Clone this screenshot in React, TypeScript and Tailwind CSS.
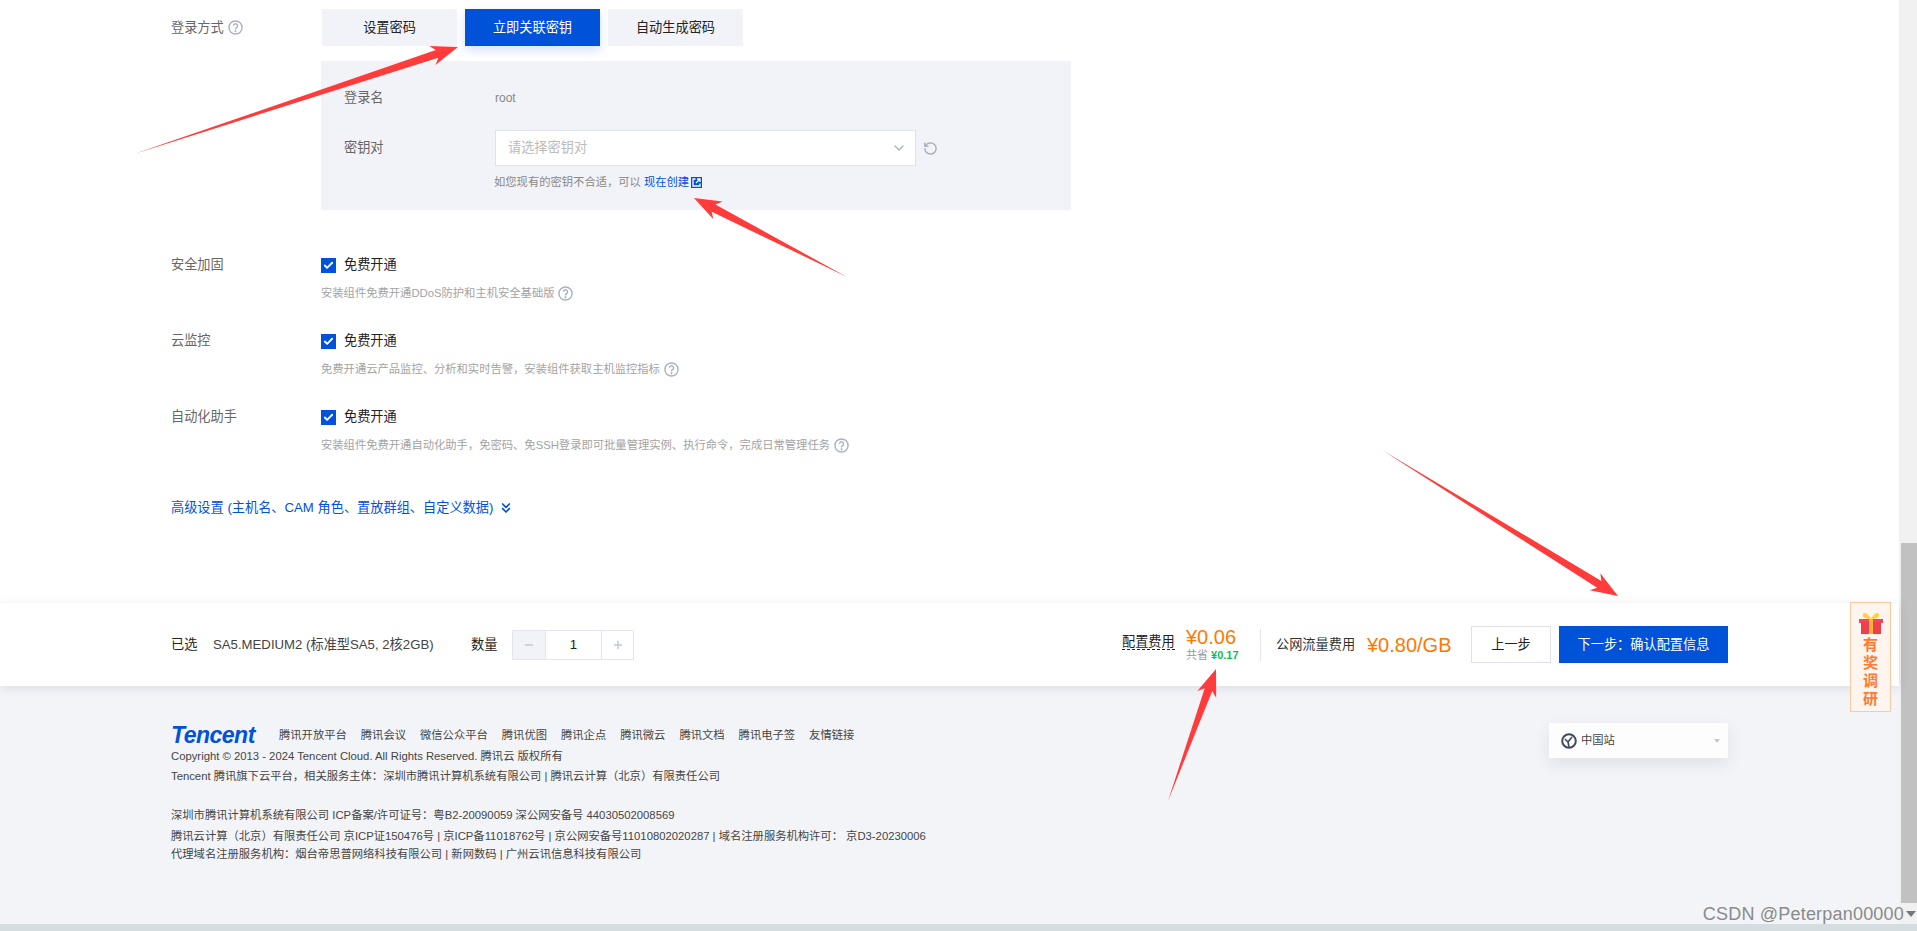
import React from "react";
import { Check, ChevronDown, ChevronsDown, Minus, Plus, RotateCw } from "lucide-react";

const font = "[font-family:'Liberation_Sans','Noto_Sans_CJK_SC',sans-serif]";

const HelpIcon = ({ size = 15 }: { size?: number }) => (
  <svg width={size} height={size} viewBox="0 0 16 16" fill="none" stroke="#a9b2c2" className="shrink-0">
    <circle cx="8" cy="8" r="7" strokeWidth="1.5" />
    <path d="M5.8 6.2a2.2 2.2 0 1 1 3.4 1.9C8.4 8.6 8 9 8 10" strokeWidth="1.5" />
    <circle cx="8" cy="12" r="0.7" fill="#a9b2c2" />
  </svg>
);

// tapered red annotation arrow, tail to tip
const Arrow = ({ x1, y1, x2, y2 }: { x1: number; y1: number; x2: number; y2: number }) => {
  const len = Math.hypot(x2 - x1, y2 - y1);
  const ux = (x2 - x1) / len;
  const uy = (y2 - y1) / len;
  const pt = (back: number, side: number) =>
    `${x2 - ux * back - uy * side},${y2 - uy * back + ux * side}`;
  const points = [
    `${x1},${y1}`,
    pt(22, 4),
    pt(27, 10),
    `${x2},${y2}`,
    pt(27, -10),
    pt(22, -4),
  ].join(" ");
  return <polygon points={points} fill="#ff3b3b" />;
};

const options = [
  { label: "安全加固", desc: "安装组件免费开通DDoS防护和主机安全基础版" },
  { label: "云监控", desc: "免费开通云产品监控、分析和实时告警，安装组件获取主机监控指标" },
  { label: "自动化助手", desc: "安装组件免费开通自动化助手，免密码、免SSH登录即可批量管理实例、执行命令，完成日常管理任务" },
];

const links = ["腾讯开放平台", "腾讯会议", "微信公众平台", "腾讯优图", "腾讯企点", "腾讯微云", "腾讯文档", "腾讯电子签", "友情链接"];

const App = () => {
  return (
    <div className={`${font} relative h-[931px] flex flex-col overflow-hidden bg-white text-[13.2px] text-[#333]`}>
      <div className="flex h-[924px]">
        <div className="flex-1 min-w-0 flex flex-col">
          {/* form */}
          <div className="h-[603px] pl-[171px] pt-[9px] bg-white">
            <div className="flex">
              <div className="w-[151px] h-[37px] flex items-center gap-1 text-[#666]">
                登录方式
                <HelpIcon />
              </div>
              <div className="flex gap-2">
                <div className="w-[135px] h-[37px] flex items-center justify-center bg-[#f2f3f8] text-[#222]">设置密码</div>
                <div className="w-[135px] h-[37px] flex items-center justify-center bg-[#0052d9] text-white shadow-[0_4px_10px_rgba(0,82,217,0.18)]">立即关联密钥</div>
                <div className="w-[135px] h-[37px] flex items-center justify-center bg-[#f2f3f8] text-[#222]">自动生成密码</div>
              </div>
            </div>

            <div className="ml-[150px] mt-[15px] w-[750px] h-[149px] bg-[#f2f3f8] pl-[23px] pt-[28px]">
              <div className="flex items-center h-[18px]">
                <span className="w-[151px] text-[#666]">登录名</span>
                <span className="text-[#888] text-xs">root</span>
              </div>
              <div className="flex items-center mt-[23px]">
                <span className="w-[151px] text-[#666]">密钥对</span>
                <div className="w-[421px] h-[36px] bg-white border border-[#dfe2ea] flex items-center justify-between pl-3 pr-[8px] text-[#bbb]">
                  请选择密钥对
                  <ChevronDown size={16} className="text-[#a9b2c2]" />
                </div>
                <RotateCw size={15} className="ml-[7px] text-[#a0a7b4] -scale-x-100" />
              </div>
              <div className="ml-[150px] mt-[8px] flex items-center text-[11.3px] text-[#888]">
                如您现有的密钥不合适，可以
                <span className="ml-[3px] text-[#0052d9]">现在创建</span>
                <span className="ml-[2px] w-[11px] h-[11px] bg-[#0052d9] flex items-center justify-center">
                  <svg width="9" height="9" viewBox="0 0 9 9" fill="none" stroke="#fff" strokeWidth="1.3">
                    <path d="M3.5 1H1v7h7V5.5M5 1h3v3M8 1L4 5" />
                  </svg>
                </span>
              </div>
            </div>

            <div className="mt-[46px] flex flex-col gap-[30px]">
              {options.map((o) => (
                <div key={o.label} className="flex">
                  <div className="w-[150px] leading-[18px] text-[#666]">{o.label}</div>
                  <div>
                    <div className="flex items-center gap-[8px] h-[18px] text-[#222]">
                      <span className="w-[15px] h-[15px] bg-[#0052d9] flex items-center justify-center">
                        <Check size={11} strokeWidth={4} className="text-white" />
                      </span>
                      免费开通
                    </div>
                    <div className="mt-[10px] flex items-center gap-[4px] text-[11.3px] leading-[18px] text-[#a3a3a3]">
                      {o.desc}
                      <HelpIcon />
                    </div>
                  </div>
                </div>
              ))}
            </div>

            <div className="mt-[44px] flex items-center gap-[5px] text-[#0052d9]">
              高级设置 (主机名、CAM 角色、置放群组、自定义数据)
              <ChevronsDown size={16} strokeWidth={2.5} />
            </div>
          </div>

          {/* selection bar */}
          <div className="relative z-10 h-[83px] shrink-0 bg-white shadow-[0_2px_10px_rgba(54,58,80,0.12)] flex items-center justify-between px-[171px]">
            <div className="flex items-center">
              <span className="w-[42px] text-[#222]">已选</span>
              <span className="w-[258px] text-[#444] whitespace-nowrap">SA5.MEDIUM2 (标准型SA5, 2核2GB)</span>
              <span className="w-[41px] text-[#222]">数量</span>
              <div className="flex items-center">
                <span className="w-[34px] h-[30px] bg-[#f2f3f8] border border-[#e3e6ee] flex items-center justify-center">
                  <Minus size={12} strokeWidth={3} className="text-[#c0c8d6]" />
                </span>
                <span className="w-[55px] h-[30px] border-y border-[#e3e6ee] flex items-center justify-center text-[#222]">1</span>
                <span className="w-[33px] h-[30px] border border-[#e3e6ee] flex items-center justify-center">
                  <Plus size={12} strokeWidth={3} className="text-[#c0c8d6]" />
                </span>
              </div>
            </div>

            <div className="flex items-center">
              <span className="w-[53px] mr-[11px] leading-[15px] border-b border-dashed border-[#222] text-[#222] -mt-[6px] whitespace-nowrap">配置费用</span>
              <div className="w-[74px]">
                <div className="text-[20px] leading-[24px] text-[#ff7800] -mt-[2px]">¥0.06</div>
                <div className="text-[11px] leading-[13px] text-[#999]">
                  共省 <b className="text-[#0abf5b]">¥0.17</b>
                </div>
              </div>
              <span className="w-px h-[32px] bg-[#e3e6ee] mr-[15px]" />
              <span className="w-[91px] text-[#333] whitespace-nowrap">公网流量费用</span>
              <span className="w-[104px] text-[20px] text-[#ff7800]">¥0.80/GB</span>
              <span className="w-[80px] h-[37px] border border-[#dfe2ea] flex items-center justify-center text-[#222] mr-[8px]">上一步</span>
              <span className="w-[169px] h-[37px] bg-[#0052d9] flex items-center justify-center text-white">下一步：确认配置信息</span>
            </div>
          </div>

          {/* footer */}
          <div className="flex-1 bg-[#f3f4f8] px-[171px] pt-[37px] flex justify-between text-[11.3px] text-[#444]">
            <div className="leading-[20px]">
              <div className="flex items-center gap-[14px] h-[24px]">
                <span className="w-[94px] text-[23px] font-bold italic text-[#0052d9] tracking-[-0.5px]">Tencent</span>
                {links.map((l) => (
                  <span key={l}>{l}</span>
                ))}
              </div>
              <div className="mt-[-1px]">Copyright © 2013 - 2024 Tencent Cloud. All Rights Reserved. 腾讯云 版权所有</div>
              <div>Tencent 腾讯旗下云平台，相关服务主体：深圳市腾讯计算机系统有限公司 | 腾讯云计算（北京）有限责任公司</div>
              <div className="mt-[19px]">深圳市腾讯计算机系统有限公司 ICP备案/许可证号：粤B2-20090059 深公网安备号 44030502008569</div>
              <div className="mt-[1px]">腾讯云计算（北京）有限责任公司 京ICP证150476号 | 京ICP备11018762号 | 京公网安备号11010802020287 | 域名注册服务机构许可： 京D3-20230006</div>
              <div className="-mt-[2px]">代理域名注册服务机构：烟台帝思普网络科技有限公司 | 新网数码 | 广州云讯信息科技有限公司</div>
            </div>
            <div className="w-[179px] h-[35px] bg-white/80 shadow-[0_6px_16px_rgba(54,58,80,0.1)] flex items-center justify-between pl-[12px] pr-[8px]">
              <span className="flex items-center gap-[4px]">
                <svg width="16" height="16" viewBox="0 0 16 16" fill="none" stroke="#3d4a66" strokeWidth="2">
                  <circle cx="8" cy="8" r="6.8" />
                  <path d="M4 6l3 3 4-5M7 9l1 5" strokeWidth="1.6" />
                </svg>
                中国站
              </span>
              <span className="w-0 h-0 border-x-[3px] border-x-transparent border-t-[4px] border-t-[#c4c8d0]" />
            </div>
          </div>
        </div>

        {/* scrollbar */}
        <div className="w-[18px] shrink-0 bg-[#f1f1f1] pl-[2px] pt-[543px]">
          <div className="h-[360px] bg-[#c1c1c1]" />
        </div>
      </div>
      <div className="h-[7px] shrink-0 bg-[#d5dde0]" />

      {/* survey widget */}
      <div className="absolute z-20 left-[1850px] top-[602px] w-[41px] h-[110px] bg-[#fff4ee] border border-[#ffc9a0] flex flex-col items-center pt-[8px]">
        <svg width="26" height="24" viewBox="0 0 26 24">
          <path d="M13 8C9 0 4 1 5 5c.4 2 4 3 8 3zM13 8c4-8 9-7 8-3-.4 2-4 3-8 3z" fill="#ffcf3f" />
          <rect x="1" y="8" width="24" height="4" fill="#f2475a" />
          <rect x="3" y="11" width="20" height="12" fill="#ee3f4e" />
          <rect x="11" y="8" width="4" height="15" fill="#f7b23e" />
        </svg>
        <div className="mt-[1px] w-[16px] text-[15px] leading-[18px] font-bold text-[#ff7a2e] text-center">有奖调研</div>
      </div>

      {/* watermark */}
      <div className="absolute z-20 right-0 bottom-[3px] h-[28px] flex items-center text-[#8a8a8a] text-[18px] pr-[1px]">
        <span className="[font-family:'Liberation_Sans',sans-serif] tracking-[0.2px]">CSDN @Peterpan00000</span>
        <span className="ml-[2px] w-0 h-0 border-x-[5px] border-x-transparent border-t-[6px] border-t-[#777]" />
      </div>

      {/* annotation arrows */}
      <svg className="absolute inset-0 z-30 pointer-events-none" width="1917" height="931">
        <Arrow x1={134} y1={154} x2={458} y2={47} />
        <Arrow x1={847} y1={277} x2={694} y2={198} />
        <Arrow x1={1382} y1={450} x2={1618} y2={596} />
        <Arrow x1={1168} y1={801} x2={1216} y2={669} />
      </svg>
    </div>
  );
};

export default App;
